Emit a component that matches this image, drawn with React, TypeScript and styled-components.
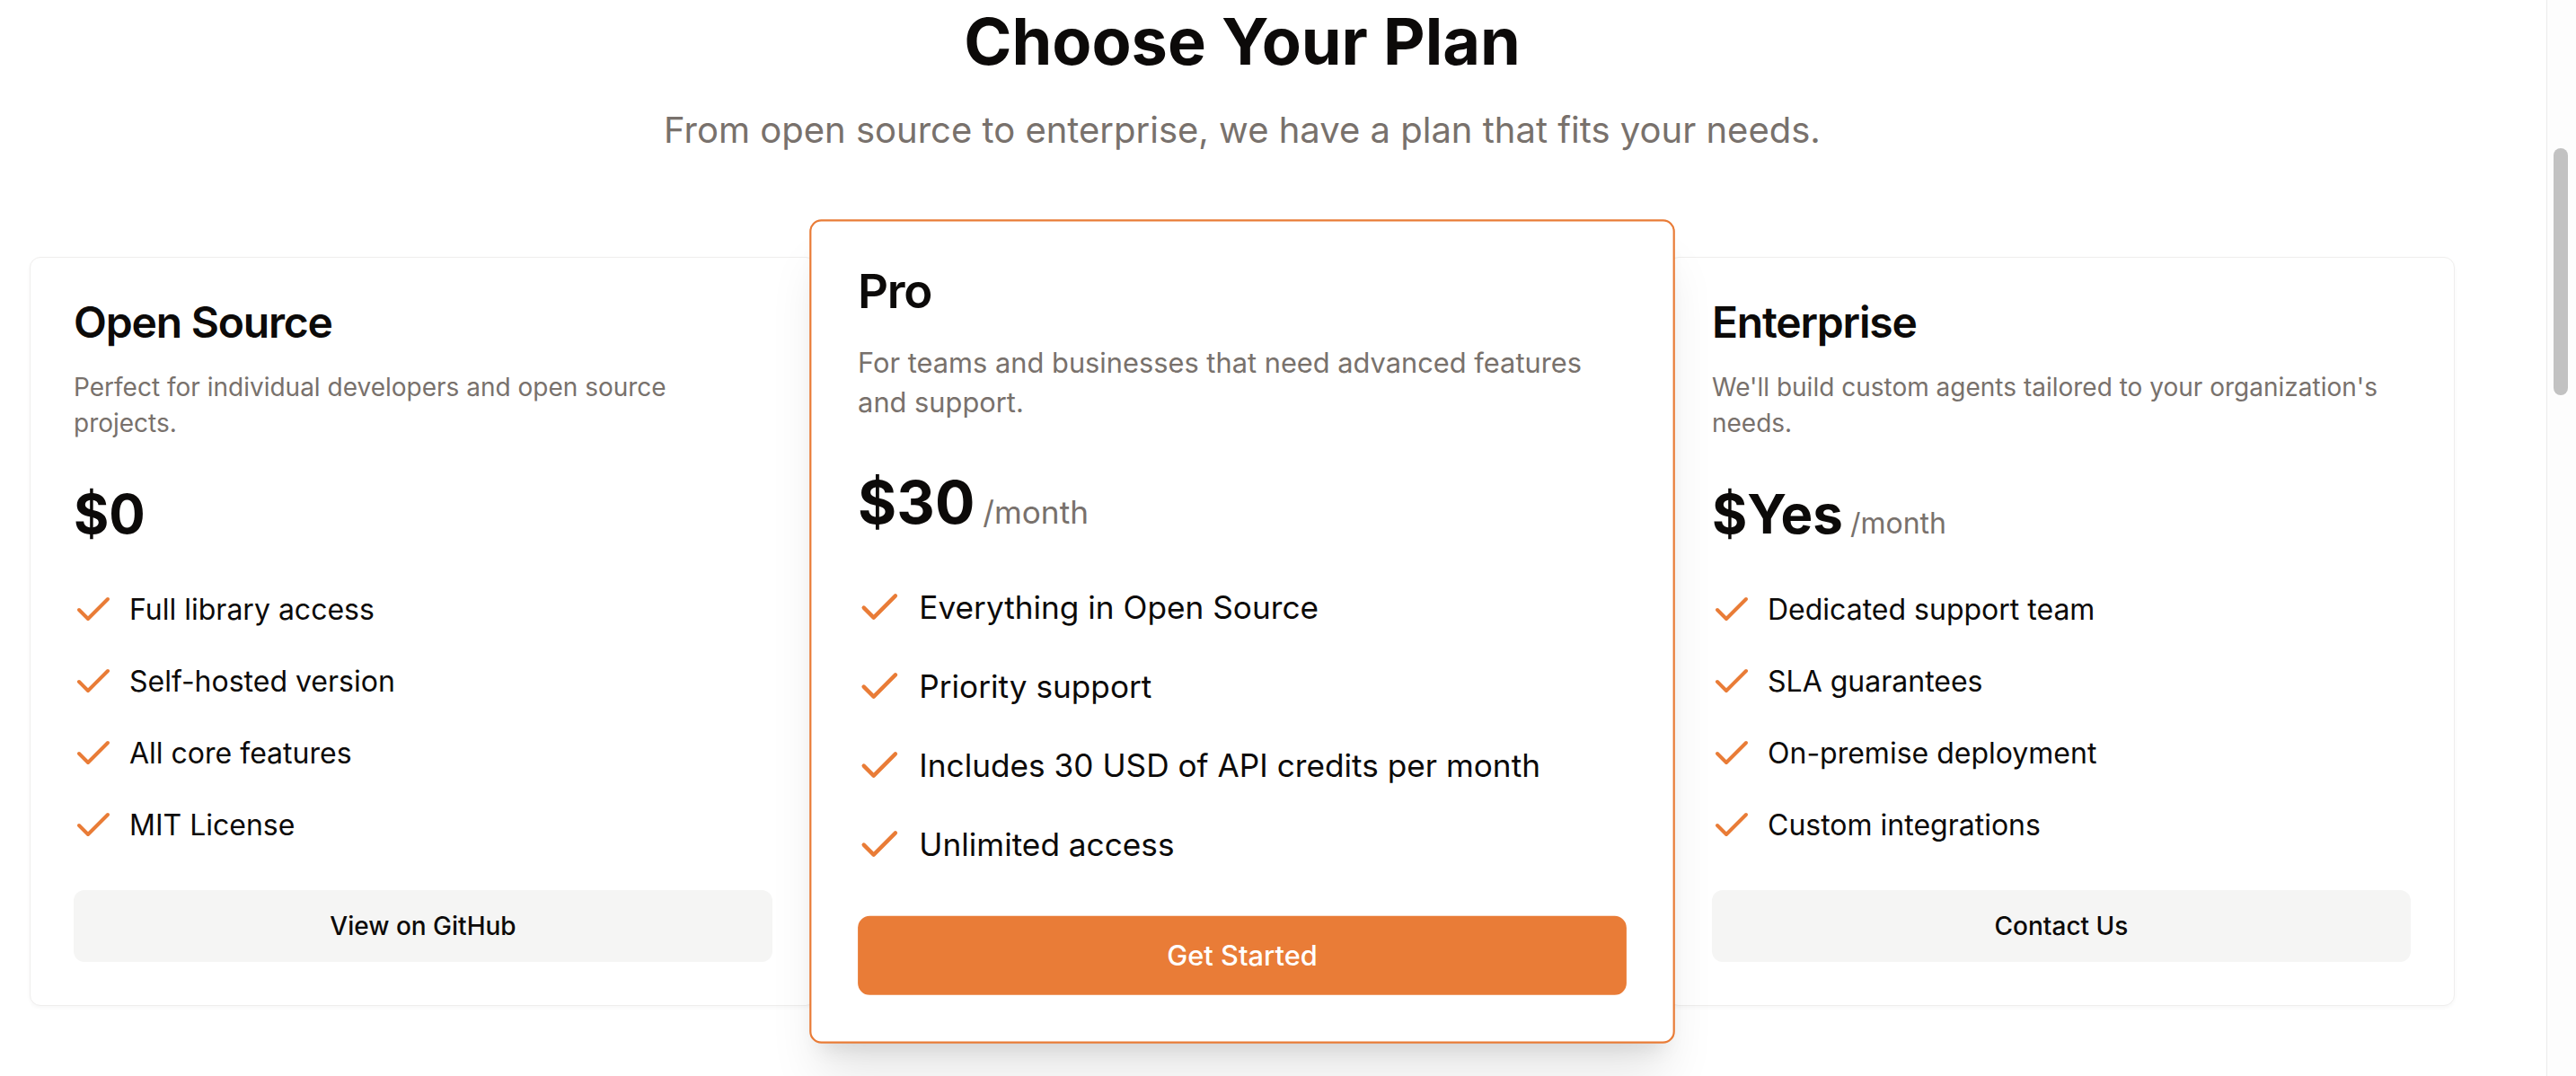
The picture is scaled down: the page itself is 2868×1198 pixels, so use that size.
import React from "react";
import styled, { createGlobalStyle, css } from "styled-components";
import { Check } from "lucide-react";

const ORANGE = "#e97c37";
const INK = "#0c0a09";
const MUTED = "#78716c";

const GlobalStyle = createGlobalStyle`
  html, body {
    margin: 0;
    padding: 0;
    background: #ffffff;
    font-family: Inter, "Noto Sans", "Liberation Sans", sans-serif;
    color: ${INK};
    overflow: hidden;
  }
  * { box-sizing: border-box; }
`;

const Page = styled.div`
  display: flex;
  width: 2868px;
  height: 1198px;
  overflow: hidden;
  background: #ffffff;
`;

const Main = styled.main`
  flex: 0 0 2766px;
  display: flex;
  flex-direction: column;
  align-items: center;
  padding-top: 6px;
`;

const Title = styled.h1`
  margin: 0;
  font-size: 72px;
  line-height: 80px;
  font-weight: 700;
  color: ${INK};
`;

const Subtitle = styled.p`
  margin: 31px 0 0;
  font-size: 40px;
  line-height: 56px;
  color: ${MUTED};
`;

const Grid = styled.div`
  margin-top: 113px;
  width: 2700px;
  display: grid;
  grid-template-columns: repeat(3, 1fr);
  gap: 36px;
  align-items: stretch;
`;

const Card = styled.div<{ $featured?: boolean }>`
  position: relative;
  display: flex;
  flex-direction: column;
  padding: 48px;
  background: #ffffff;
  border-radius: 12px;
  border: 1px solid #efeeed;
  box-shadow: 0 2px 4px rgba(0, 0, 0, 0.035);
  ${(p) =>
    p.$featured &&
    css`
      z-index: 2;
      border: 2px solid ${ORANGE};
      padding: 47px;
      transform: scale(1.1);
      box-shadow: 0 40px 50px -10px rgba(0, 0, 0, 0.1),
        0 16px 20px -12px rgba(0, 0, 0, 0.1);
    `}
`;

const PlanName = styled.h3`
  margin: 0;
  font-size: 48px;
  line-height: 48px;
  font-weight: 600;
  letter-spacing: -1.2px;
  color: ${INK};
`;

const Description = styled.p`
  margin: 28px 0 0;
  font-size: 28px;
  line-height: 40px;
  color: ${MUTED};
`;

const PriceRow = styled.div`
  margin-top: 45px;
  display: flex;
  align-items: baseline;
  height: 72px;
`;

const Price = styled.span`
  font-size: 60px;
  line-height: 72px;
  font-weight: 700;
  color: ${INK};
`;

const Period = styled.span`
  margin-left: 8px;
  font-size: 32px;
  line-height: 48px;
  color: ${MUTED};
`;

const FeatureList = styled.ul`
  margin: 47px 0 0;
  padding: 0;
  list-style: none;
  display: flex;
  flex-direction: column;
  gap: 32px;
`;

const FeatureItem = styled.li`
  display: flex;
  align-items: flex-start;
  gap: 16px;
  font-size: 32px;
  line-height: 48px;
  color: ${INK};

  svg {
    flex-shrink: 0;
    margin-left: -2px;
  }
`;

const ActionButton = styled.button<{ $primary?: boolean }>`
  margin-top: 48px;
  height: 80px;
  width: 100%;
  border: none;
  border-radius: 12px;
  font-family: inherit;
  font-size: 28px;
  line-height: 40px;
  font-weight: 500;
  cursor: pointer;
  background: ${(p) => (p.$primary ? ORANGE : "#f5f5f4")};
  color: ${(p) => (p.$primary ? "#ffffff" : INK)};
`;

const ScrollTrack = styled.div`
  margin-left: auto;
  width: 33px;
  height: 100%;
  border-left: 1px solid #ececec;
  background: #fdfdfd;
  padding: 165px 0 0 7px;
`;

const ScrollThumb = styled.div`
  width: 16px;
  height: 275px;
  border-radius: 8px;
  background: #c2c2c2;
`;

type Plan = {
  name: string;
  description: string;
  price: string;
  period?: string;
  features: string[];
  cta: string;
  featured?: boolean;
};

const plans: Plan[] = [
  {
    name: "Open Source",
    description: "Perfect for individual developers and open source projects.",
    price: "$0",
    features: [
      "Full library access",
      "Self-hosted version",
      "All core features",
      "MIT License",
    ],
    cta: "View on GitHub",
  },
  {
    name: "Pro",
    description:
      "For teams and businesses that need advanced features and support.",
    price: "$30",
    period: "/month",
    features: [
      "Everything in Open Source",
      "Priority support",
      "Includes 30 USD of API credits per month",
      "Unlimited access",
    ],
    cta: "Get Started",
    featured: true,
  },
  {
    name: "Enterprise",
    description: "We'll build custom agents tailored to your organization's needs.",
    price: "$Yes",
    period: "/month",
    features: [
      "Dedicated support team",
      "SLA guarantees",
      "On-premise deployment",
      "Custom integrations",
    ],
    cta: "Contact Us",
  },
];

function PlanCard({ plan }: { plan: Plan }) {
  return (
    <Card $featured={plan.featured}>
      <PlanName>{plan.name}</PlanName>
      <Description>{plan.description}</Description>
      <PriceRow>
        <Price>{plan.price}</Price>
        {plan.period && <Period>{plan.period}</Period>}
      </PriceRow>
      <FeatureList>
        {plan.features.map((f) => (
          <FeatureItem key={f}>
            <Check size={48} color={ORANGE} strokeWidth={2} />
            <span>{f}</span>
          </FeatureItem>
        ))}
      </FeatureList>
      <ActionButton $primary={plan.featured}>{plan.cta}</ActionButton>
    </Card>
  );
}

export default function App() {
  return (
    <>
      <GlobalStyle />
      <Page>
        <Main>
          <Title>Choose Your Plan</Title>
          <Subtitle>
            From open source to enterprise, we have a plan that fits your needs.
          </Subtitle>
          <Grid>
            {plans.map((p) => (
              <PlanCard key={p.name} plan={p} />
            ))}
          </Grid>
        </Main>
        <ScrollTrack>
          <ScrollThumb />
        </ScrollTrack>
      </Page>
    </>
  );
}
